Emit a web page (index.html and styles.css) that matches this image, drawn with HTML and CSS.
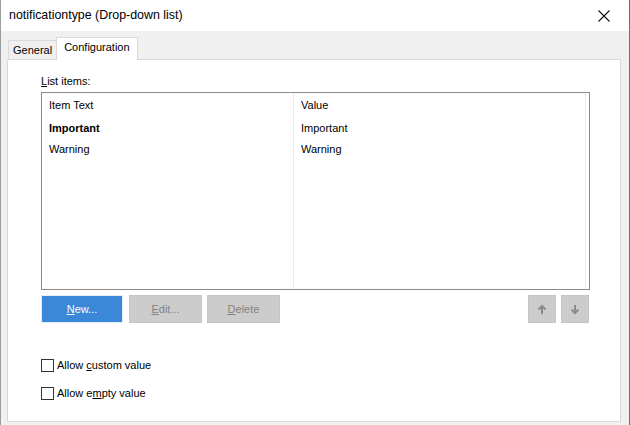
FILE: index.html
```html
<!DOCTYPE html>
<html lang="en">
<head>
  <meta charset="UTF-8">
  <title>notificationtype (Drop-down list)</title>
  <link rel="stylesheet" href="styles.css">
</head>
<body>
  <div class="window">
    <!-- title bar -->
    <div class="titlebar">
      <span class="title">notificationtype (Drop-down list)</span>
      <svg class="close" width="12" height="12" viewBox="0 0 12 12">
        <path d="M0.5 0.5 L11.5 11.5 M11.5 0.5 L0.5 11.5" stroke="#111" stroke-width="1.1" fill="none"/>
      </svg>
    </div>

    <div class="client">
      <!-- tabs -->
      <div class="tabs">
        <div class="tab">General</div>
        <div class="tab active">Configuration</div>
      </div>

      <div class="panel">
        <div class="label"><u>L</u>ist items:</div>

        <div class="listbox">
          <div class="col col-text">
            <div class="cell head">Item Text</div>
            <div class="cell bold">Important</div>
            <div class="cell">Warning</div>
          </div>
          <div class="col col-value">
            <div class="cell head">Value</div>
            <div class="cell">Important</div>
            <div class="cell">Warning</div>
          </div>
          <div class="col col-rest"></div>
        </div>

        <div class="buttons">
          <button class="btn primary"><u>N</u>ew...</button>
          <button class="btn"><u>E</u>dit...</button>
          <button class="btn"><u>D</u>elete</button>
          <div class="spacer"></div>
          <button class="btn arrow">
            <svg width="10" height="11" viewBox="0 0 10 11">
              <path d="M5 10 V2 M1.5 5.5 L5 2 L8.5 5.5" stroke="#8a8a8a" stroke-width="2" fill="none"/>
            </svg>
          </button>
          <button class="btn arrow">
            <svg width="10" height="11" viewBox="0 0 10 11">
              <path d="M5 1 V9 M1.5 5.5 L5 9 L8.5 5.5" stroke="#8a8a8a" stroke-width="2" fill="none"/>
            </svg>
          </button>
        </div>

        <label class="check"><span class="box"></span><span>Allow <u>c</u>ustom value</span></label>
        <label class="check"><span class="box"></span><span>Allow e<u>m</u>pty value</span></label>
      </div>
    </div>
  </div>
</body>
</html>
```

FILE: styles.css
```css
* {
  margin: 0;
  padding: 0;
  box-sizing: border-box;
}

body {
  font-family: 'Liberation Sans', Arial, sans-serif;
  font-size: 11px;
  color: #000;
  background: #fff;
  width: 630px;
  height: 425px;
  overflow: hidden;
}

/* window frame */
.window {
  width: 630px;
  height: 425px;
  border-left: 1px solid #9c9c9c;
  border-right: 1px solid #6f6f6f;
  display: flex;
  flex-direction: column;
}

.titlebar {
  height: 31px;
  background: #fff;
  display: flex;
  align-items: center;
  padding: 0 19px 0 8px;
}

.title {
  flex: 1;
  font-size: 12.4px;
  color: #000;
  padding-bottom: 1px;
}

.client {
  flex: 1;
  background: #f0f0f0;
  padding: 6px 8px 3px 6px;
  display: flex;
  flex-direction: column;
}

/* tabs */
.tabs {
  display: flex;
  align-items: flex-end;
  height: 22px;
  padding-left: 1px;
  position: relative;
  z-index: 1;
}

.tab {
  height: 19px;
  padding: 0 4px;
  border: 1px solid #d9d9d9;
  border-bottom: none;
  background: #f0f0f0;
  line-height: 19px;
  color: #000;
}

.tab.active {
  background: #fff;
  padding: 0 7px;
  line-height: 19px;
  margin-bottom: -1px;
  height: 23px;
  margin-left: -1px;
}

.panel {
  flex: 1;
  background: #fff;
  border: 1px solid #d9d9d9;
  padding: 14px 30px 0 33px;
}

.label {
  height: 15px;
  line-height: 15px;
  color: #000;
}

/* list */
.listbox {
  margin-top: 3px;
  height: 198px;
  border: 1px solid #8a8a8a;
  display: flex;
}

.col {
  border-right: 1px solid #eaeaea;
}

.col-text {
  width: 252px;
}

.col-value {
  width: 292px;
}

.col-rest {
  flex: 1;
  border-right: none;
}

.cell {
  height: 21px;
  line-height: 21px;
  padding-left: 7px;
  color: #000;
}

.cell.head {
  height: 24px;
  line-height: 24px;
  margin-bottom: 1px;
}

.cell.bold {
  font-weight: bold;
}

/* buttons */
.buttons {
  display: flex;
  gap: 5px;
  margin-top: 5px;
  height: 28px;
  padding-right: 1px;
}

.spacer {
  flex: 1;
}

.btn {
  font-family: inherit;
  font-size: 11px;
  height: 28px;
  width: 73px;
  background: #cccccc;
  border: 1px solid #c6c6c6;
  color: #838383;
}

.btn.primary {
  width: 82px;
  background: #3a88d7;
  border: 1px solid #e4eef9;
  color: #fff;
  margin-right: 1px;
}

.btn.arrow {
  width: 28px;
  display: flex;
  align-items: center;
  justify-content: center;
}

/* check boxes */
.check {
  display: flex;
  align-items: center;
  height: 14px;
  margin-top: 35px;
  color: #000;
}

.check + .check {
  margin-top: 14px;
}

.box {
  width: 13px;
  height: 13px;
  border: 1px solid #333;
  background: #fff;
  margin-right: 3px;
}
```
